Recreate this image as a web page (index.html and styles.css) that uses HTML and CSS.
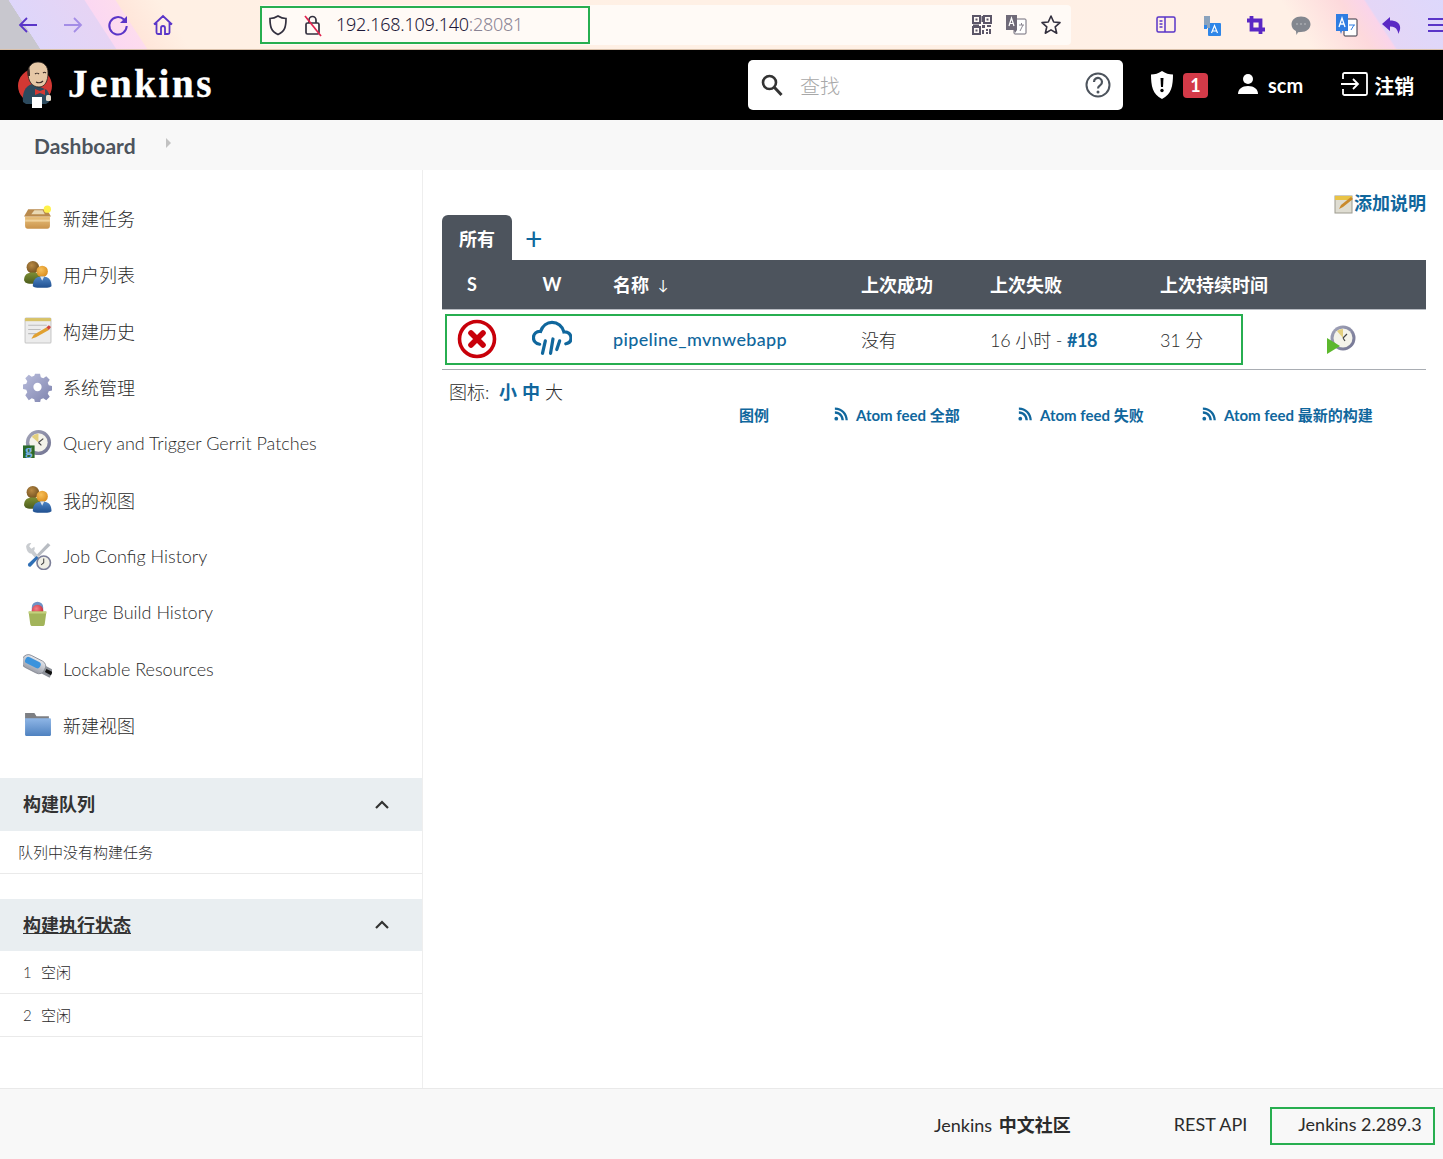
FILE: index.html
```html
<!DOCTYPE html>
<html lang="zh">
<head>
<meta charset="utf-8">
<title>Dashboard [Jenkins]</title>
<link rel="stylesheet" href="styles.css">
</head>
<body>
<svg class="defs" aria-hidden="true">
  <defs>
    <radialGradient id="gBrown" cx=".4" cy=".35" r=".7"><stop offset="0" stop-color="#b98a44"/><stop offset="1" stop-color="#6f4e1e"/></radialGradient>
    <radialGradient id="gOrange" cx=".4" cy=".35" r=".7"><stop offset="0" stop-color="#f8c058"/><stop offset="1" stop-color="#d88a1c"/></radialGradient>
    <linearGradient id="gBlue" x1="0" y1="0" x2="0" y2="1"><stop offset="0" stop-color="#4f86c6"/><stop offset="1" stop-color="#1f4f8f"/></linearGradient>
    <linearGradient id="gGreen" x1="0" y1="0" x2="0" y2="1"><stop offset="0" stop-color="#7d8f35"/><stop offset="1" stop-color="#4c5c1c"/></linearGradient>
    <linearGradient id="gGear" x1="0" y1="0" x2="1" y2="1"><stop offset="0" stop-color="#b9bddc"/><stop offset="1" stop-color="#7d82ad"/></linearGradient>
    <linearGradient id="gBox" x1="0" y1="0" x2="0" y2="1"><stop offset="0" stop-color="#e9c27e"/><stop offset="1" stop-color="#c9924a"/></linearGradient>
    <linearGradient id="gFolder" x1="0" y1="0" x2="0" y2="1"><stop offset="0" stop-color="#8fb6e6"/><stop offset="1" stop-color="#4f82c0"/></linearGradient>
    <linearGradient id="gRing" x1="0" y1="0" x2="1" y2="1"><stop offset="0" stop-color="#a5a7bb"/><stop offset="1" stop-color="#6f7190"/></linearGradient>
    <linearGradient id="gUsb" x1="0" y1="0" x2="0" y2="1"><stop offset="0" stop-color="#e4e6ec"/><stop offset="1" stop-color="#9a9ea8"/></linearGradient>
    <radialGradient id="gBall" cx=".4" cy=".35" r=".7"><stop offset="0" stop-color="#f3808a"/><stop offset="1" stop-color="#c9222f"/></radialGradient>
  </defs>
  <symbol id="people" viewBox="0 0 28 28">
    <circle cx="9.500" cy="7" r="6" fill="url(#gBrown)"/>
    <path d="M1 20c0-6 3-8 8.500-8s8.500 2 8.500 8c0 2-2 3-8 3s-8.500-1-8.500-3z" fill="url(#gGreen)"/>
    <circle cx="18.500" cy="11" r="5.500" fill="url(#gOrange)"/>
    <path d="M9.500 25c0-6 3-9 9-9s9 3 9 9c0 2.500-18 2.500-18 0z" fill="url(#gBlue)"/>
    <path d="M16.500 16h4l-2 4z" fill="#dfe6ee"/>
  </symbol>
  <symbol id="rss" viewBox="0 0 16 16">
    <circle cx="3.500" cy="12.500" r="2" fill="#10679d"/>
    <path d="M2 7.200c4 0 7 3 7 7h2.600c0-5.500-4.200-9.600-9.600-9.600z" fill="#10679d"/>
    <path d="M2 2.800v-2.300c7.800 0 13.800 6 13.800 13.700h-2.400c0-6.500-5-11.400-11.400-11.400z" fill="#10679d"/>
  </symbol>
  <symbol id="chev" viewBox="0 0 16 10">
    <path d="M2 8l6-6 6 6" fill="none" stroke="#333" stroke-width="2.200"/>
  </symbol>
</svg>

<div class="browser">
  <div class="nav-icons">
    <svg class="tool" viewBox="0 0 24 24"><path d="M21 12H4M11 5l-7 7 7 7" fill="none" stroke="#5a35c8" stroke-width="1.800"/></svg>
    <svg class="tool" viewBox="0 0 24 24"><path d="M3 12h17M13 5l7 7-7 7" fill="none" stroke="#a48de6" stroke-width="1.800"/></svg>
    <svg class="tool" viewBox="0 0 24 24"><path d="M18 6.500A8.700 8.700 0 1 0 20.700 13" fill="none" stroke="#5a35c8" stroke-width="2"/><path d="M21 3v7h-7z" fill="#5a35c8"/></svg>
    <svg class="tool" viewBox="0 0 24 24"><path d="M3 11.500L12 3l9 8.500M5.500 10v9.500c0 .8.700 1.500 1.500 1.500h3v-6a2 2 0 0 1 4 0v6h3c.8 0 1.500-.7 1.500-1.500V10" fill="none" stroke="#5a35c8" stroke-width="1.800"/></svg>
  </div>
  <div class="urlbar">
    <svg class="url-ic" viewBox="0 0 20 24"><path d="M10 3c3 2 5 2.500 8 2.500 0 8-1 13-8 16-7-3-8-8-8-16 3 0 5-.5 8-2.500z" fill="none" stroke="#33303f" stroke-width="1.700"/></svg>
    <svg class="url-ic" viewBox="0 0 20 24"><rect x="3" y="10" width="13" height="11" rx="1.500" fill="none" stroke="#33303f" stroke-width="1.700"/><path d="M6 10V7a3.500 3.500 0 0 1 7 0v3" fill="none" stroke="#33303f" stroke-width="1.700"/><path d="M2 3l16 20" stroke="#e0234e" stroke-width="1.700"/></svg>
    <span class="url">192.168.109.140<span class="port">:28081</span></span>
    <div class="url-end">
      <svg class="url-ic2 qr" viewBox="0 0 20 20"><path d="M1 1h7v7H1zM12 1h7v7h-7zM1 12h7v7H1z" fill="none" stroke="#5c5668" stroke-width="2"/><path d="M3.500 3.500h2v2h-2zM14.500 3.500h2v2h-2zM3.500 14.500h2v2h-2zM10 10h3v3h-3zM15 10h4v2h-4zM10 15h2v4h-2zM14 14h2v2h-2zM17 14h2v5h-2zM14 17h2v2h-2zM9.500 1h1.500v6H9.500zM1 9.500h6V11H1z" fill="#5c5668"/></svg>
      <svg class="url-ic2" viewBox="0 0 22 22"><rect x="9" y="5" width="12" height="15" rx="1" fill="#fff" stroke="#6f6a78"/><path d="M1 1h11v15l-2 3-1-3H1z" fill="#6f6a78"/><path d="M4 12l2.500-8 2.500 8M5 9.500h3" fill="none" stroke="#fff" stroke-width="1.200"/><path d="M14 11h5M16.500 9v2M15 17l3-6" stroke="#8b8691" fill="none"/></svg>
      <svg class="url-ic2" viewBox="0 0 22 22"><path d="M11 2l2.700 6 6.300.6-4.800 4.200 1.500 6.400L11 15.900l-5.700 3.300 1.500-6.400L2 8.600 8.300 8z" fill="none" stroke="#33303f" stroke-width="1.600" stroke-linejoin="round"/></svg>
    </div>
  </div>
  <div class="ext-icons">
    <svg class="ext" viewBox="0 0 24 24"><rect x="3" y="4" width="18" height="15" rx="1.500" fill="none" stroke="#5a35c8" stroke-width="1.500"/><path d="M11 4v15" stroke="#5a35c8" stroke-width="1.500"/><path d="M5.500 8h3M5.500 11h3M5.500 14h3" stroke="#5a35c8" stroke-width="1.500"/></svg>
    <svg class="ext" viewBox="0 0 24 24"><rect x="9" y="10" width="13" height="13" rx="1" fill="#2f86e8"/><path d="M12.500 20l3-7.500 3 7.500M13.500 18h4" fill="none" stroke="#fff" stroke-width="1.200"/><path d="M5 3h6v12H8l-1-3H5z" fill="#8ba3bd"/><path d="M5 12h3v4H5z" fill="#2f86e8"/></svg>
    <svg class="ext" viewBox="0 0 24 24"><path d="M7.500 3v13.500H21M3 7.500h13.500V21" fill="none" stroke="#5a28c4" stroke-width="3.800"/></svg>
    <svg class="ext" viewBox="0 0 24 24"><path d="M12 3.500c5.500 0 9.500 3.300 9.500 7.800s-4 7.700-9.500 7.700l-3 .2-1.500 2.800-.6-3.900C4 16.600 2.500 14.200 2.500 11.300 2.500 6.800 6.500 3.500 12 3.500z" fill="#83878f"/><circle cx="8" cy="11" r="1" fill="#a8abb1"/><circle cx="12" cy="11" r="1" fill="#a8abb1"/><circle cx="16" cy="11" r="1" fill="#a8abb1"/></svg>
    <svg class="ext" viewBox="0 0 24 24"><rect x="10" y="6" width="13" height="17" rx="1" fill="#fff" stroke="#33303f"/><path d="M2 1h12v17H8l-1 3-1-3H2z" fill="#2f7de2"/><path d="M5 14l3-9 3 9M6 11h4" fill="none" stroke="#fff" stroke-width="1.300"/><path d="M15 12h6M17 17l3-5" stroke="#2f7de2" fill="none"/></svg>
    <svg class="ext" viewBox="0 0 24 24"><path d="M11 4L3 11l8 7v-4.500c4 0 6 1.500 7 3.500 1.500 2 1 4 1 4 3-4 3-9-.5-11.500-2-1.500-4.500-2-7.500-2z" fill="#5a28c4"/></svg>
    <svg class="ext" viewBox="0 0 24 24"><path d="M4 6h20M4 12h20M4 18h20" stroke="#5a35c8" stroke-width="1.800"/></svg>
  </div>
  <div class="mark mark-url"></div>
</div>

<header class="topbar">
  <a class="brand">
    <svg class="butler" viewBox="0 0 35 48">
      <circle cx="17" cy="25" r="17" fill="#d33833"/>
      <path d="M5 41c-1-9 2-16 9-18l6 2 9 4c3 4 3 8 2 12l-3 2H8z" fill="#2c4a5e"/>
      <path d="M10 12C10 5 14 1 20 1s10 4 10 11c0 8-3 14-9 14-7 0-11-6-11-14z" fill="#e6c8a6" stroke="#2a2320" stroke-width=".8"/>
      <path d="M10 15c-1-3-1-6 1-9 1 3 1 6 1 9z" fill="#3a2c28"/>
      <path d="M17 13c1-1 3-1 4 0M25 12c1-1 2-1 3 0M18 21c2 1 5 1 7-1" fill="none" stroke="#3a2c28" stroke-width="1.100"/>
      <path d="M17 28l5 2 5-2v6l-5-2-5 2z" fill="#d33833"/>
      <path d="M14 36h10v11H14z" fill="#fff"/>
      <rect x="28" y="34" width="5" height="6" rx="1.500" fill="#e6dccd"/>
    </svg>
    <span class="brand-name">Jenkins</span>
  </a>
  <div class="search">
    <svg class="search-ic" viewBox="0 0 24 24"><circle cx="9.500" cy="9.500" r="6.500" fill="none" stroke="#333" stroke-width="2.600"/><path d="M14.500 14.500l7 7.500" stroke="#333" stroke-width="3"/></svg>
    <span class="search-ph">查找</span>
    <svg class="help-ic" viewBox="0 0 26 26"><circle cx="13" cy="13" r="11.500" fill="none" stroke="#4d545d" stroke-width="2"/><path d="M9 10a4 4 0 1 1 6.300 3.200c-1.500 1-2.300 1.800-2.300 3.300" fill="none" stroke="#4d545d" stroke-width="2.200"/><circle cx="13" cy="20" r="1.500" fill="#4d545d"/></svg>
  </div>
  <svg class="shield" viewBox="0 0 24 30"><path d="M12 1c3.500 2.500 7 3.400 11 3.600 0 11-1.500 20-11 24.400C2.500 24.600 1 15.600 1 4.600 5 4.400 8.500 3.500 12 1z" fill="#fff"/><path d="M10.500 8h3l-.5 9h-2z" fill="#000"/><circle cx="12" cy="20.500" r="1.700" fill="#000"/></svg>
  <span class="badge">1</span>
  <svg class="user-ic" viewBox="0 0 22 22"><circle cx="11" cy="6" r="5" fill="#fff"/><path d="M1 21c0-5 4-8 10-8s10 3 10 8z" fill="#fff"/></svg>
  <span class="user-name">scm</span>
  <svg class="logout-ic" viewBox="0 0 28 24"><path d="M3 7V2.500C3 1.700 3.700 1 4.500 1h21c.8 0 1.500.7 1.500 1.500v19c0 .8-.7 1.500-1.500 1.500h-21c-.8 0-1.500-.7-1.500-1.500V17" fill="none" stroke="#fff" stroke-width="1.800"/><path d="M1 12h17M13 7l5 5-5 5" fill="none" stroke="#fff" stroke-width="1.800"/></svg>
  <span class="logout">注销</span>
</header>

<nav class="crumbs">
  <a class="crumb">Dashboard</a>
  <span class="crumb-arrow"></span>
</nav>

<div class="page">
  <aside class="side">
    <ul class="tasks">
      <li class="task">
        <svg class="task-ic" viewBox="0 0 28 28"><path d="M2 12h24v9c0 1.500-1 3-2.500 3h-19C3 24 2 22.500 2 21z" fill="url(#gBox)"/><path d="M1 12l4-7h18l4 7z" fill="#b98a4d"/><path d="M2 15h24v2H2z" fill="#f0d29c"/><path d="M8 10l3-4h8l2 4z" fill="#e9d9b4"/><circle cx="23.500" cy="5" r="3.500" fill="#fff24a"/></svg>
        <span>新建任务</span>
      </li>
      <li class="task"><svg class="task-ic"><use href="#people"/></svg><span>用户列表</span></li>
      <li class="task">
        <svg class="task-ic" viewBox="0 0 28 28"><rect x="2" y="2" width="25" height="24" rx="1" fill="#ececec" stroke="#c6c6c6"/><path d="M2 2h25v3H2z" fill="#d8c266"/><path d="M5 9h18M5 13h12M5 17h8" stroke="#bcbcbc"/><path d="M8 22l2.500-4 12-7 2.500 2.500-12.500 7z" fill="#e0a030"/><path d="M22.500 11l2.500 2.500 2-3-2-1.500z" fill="#d1433b"/></svg>
        <span>构建历史</span>
      </li>
      <li class="task">
        <svg class="task-ic" viewBox="0 0 28 28"><path d="M11.500 1h5l.8 3.500 2.500 1 3-2 3.500 3.500-2 3 1 2.500 3.500.8v4.400l-3.500.8-1 2.500 2 3-3.500 3.500-3-2-2.500 1-.8 3.500h-5l-.8-3.500-2.500-1-3 2L1.700 22.500l2-3-1-2.500-3.500-.8V11.800l3.500-.8 1-2.500-2-3L5.200 2l3 2 2.500-1z" fill="url(#gGear)" transform="scale(.96) translate(.6 -.2)"/><circle cx="14" cy="13.500" r="4" fill="#fff"/></svg>
        <span>系统管理</span>
      </li>
      <li class="task">
        <svg class="task-ic" viewBox="0 0 30 30"><circle cx="16" cy="14" r="13" fill="url(#gRing)"/><circle cx="16" cy="14" r="9.500" fill="#f4f3ea"/><path d="M16 14V5a9 9 0 0 0-7 3z" fill="#e3cf7e"/><path d="M16 14l5-4M16 14l3 3" stroke="#444" stroke-width="1.200"/><rect x="0" y="17" width="12" height="13" fill="#2a6a2a"/><text class="gerrit-g" x="6" y="27" text-anchor="middle">g</text></svg>
        <span>Query and Trigger Gerrit Patches</span>
      </li>
      <li class="task"><svg class="task-ic"><use href="#people"/></svg><span>我的视图</span></li>
      <li class="task">
        <svg class="task-ic" viewBox="0 0 28 28"><path d="M3 5c1-2.500 3-3.500 5-3L6 5l2 2.500 3-2c.5 1.500.5 3-.5 4L23 24l-2.500 2L8 12c-2 .5-4.500-2-5-7z" fill="#c9ccd0"/><path d="M24 2l2.500 2-11 11-2-2z" fill="#b8bcc2"/><path d="M13 14.500l2 2-7.500 8c-1.500 1-3.500-.5-2.500-2.500z" fill="#2f6fb5"/><circle cx="20" cy="21" r="6.500" fill="#f0efe6" stroke="#7c7f99" stroke-width="1.600"/><path d="M20 17v4l-2.500 2" fill="none" stroke="#444"/></svg>
        <span>Job Config History</span>
      </li>
      <li class="task">
        <svg class="task-ic" viewBox="0 0 28 28"><path d="M8.500 9a5.500 5.500 0 0 1 11 0v4h-11z" fill="#6f93c6"/><circle cx="14" cy="12" r="5.500" fill="url(#gBall)"/><path d="M5.500 13h17v1l-1.500 11c0 1-1 2-2 2h-10c-1 0-2-1-2-2L5.500 14z" fill="#a2b45a"/><path d="M5.500 13h17v2h-17z" fill="#c3d27d"/></svg>
        <span>Purge Build History</span>
      </li>
      <li class="task">
        <svg class="task-ic" viewBox="0 0 30 28"><g transform="rotate(27 12 10)"><rect x="-2" y="3" width="26" height="14" rx="6.500" fill="url(#gUsb)" stroke="#7f838d" stroke-width=".8"/><rect x="1" y="5.500" width="17" height="7" rx="3" fill="#3b93dc"/><rect x="23" y="6" width="9" height="9" fill="#8c9098"/><rect x="25" y="8.500" width="7" height="3.500" fill="#111"/></g></svg>
        <span>Lockable Resources</span>
      </li>
      <li class="task">
        <svg class="task-ic" viewBox="0 0 28 28"><path d="M2 3h9l2 3h12v6H2z" fill="#7d7f83"/><path d="M2 8h24c.5 0 1 .5 1 1v15c0 .5-.5 1-1 1H3c-.5 0-1-.5-1-1z" fill="url(#gFolder)"/></svg>
        <span>新建视图</span>
      </li>
    </ul>

    <section class="pane pane-queue">
      <h2 class="pane-head"><span>构建队列</span><svg class="chev"><use href="#chev"/></svg></h2>
      <div class="pane-row pane-note">队列中没有构建任务</div>
    </section>
    <section class="pane pane-exec">
      <h2 class="pane-head"><span class="u">构建执行状态</span><svg class="chev"><use href="#chev"/></svg></h2>
      <div class="pane-row exec"><span class="num">1</span><span>空闲</span></div>
      <div class="pane-row exec"><span class="num">2</span><span>空闲</span></div>
    </section>
  </aside>

  <main class="main">
    <div class="desc">
      <svg class="note-ic" viewBox="0 0 20 20"><rect x="1" y="2" width="17" height="17" fill="#dfddd2" stroke="#9c9a8e"/><path d="M1 2h17v4H1z" fill="#e9c346"/><path d="M5 15l2-4 10-8 2 2-10 8z" fill="#c98a2c"/></svg>
      <a class="link">添加说明</a>
    </div>
    <div class="tabs">
      <a class="tab">所有</a>
      <a class="tab-add">+</a>
    </div>
    <table class="jobs">
      <colgroup><col class="c1"><col class="c2"><col class="c3"><col class="c4"><col class="c5"><col class="c6"><col class="c7"></colgroup>
      <thead>
        <tr>
          <th class="ctr sh">S</th><th class="ctr">W</th><th class="name">名称&nbsp;&nbsp;<span class="arrow">↓</span></th>
          <th>上次成功</th><th>上次失败</th><th>上次持续时间</th><th></th>
        </tr>
      </thead>
      <tbody>
        <tr>
          <td class="ctr">
            <svg class="st" viewBox="0 0 40 40"><circle cx="20" cy="20" r="17.500" fill="#fff" stroke="#c8000a" stroke-width="3.600"/><path d="M14 14l12 12M26 14L14 26" stroke="#c8000a" stroke-width="5.600" stroke-linecap="round"/></svg>
          </td>
          <td class="ctr">
            <svg class="wx" viewBox="0 0 42 38"><path d="M8 24.500C4 24 1.500 21 1.500 17.500 1.500 13.500 5 10.500 9 11c2-6 7-9.500 12-9.500 6 0 11 4 12.500 10 4-.5 7.500 2.500 7.500 6.500 0 3.500-2.500 5.500-5.500 6" fill="none" stroke="#10679d" stroke-width="3.400" stroke-linecap="round"/><path d="M14 21l-3 13M22 19l-2.500 15M29 21l-3 9" fill="none" stroke="#10679d" stroke-width="3.400" stroke-linecap="round"/></svg>
          </td>
          <td class="name"><a class="link job">pipeline_mvnwebapp</a></td>
          <td>没有</td>
          <td>16 小时 - <a class="link bld">#18</a></td>
          <td>31 分</td>
          <td class="ctr">
            <svg class="sched" viewBox="0 0 30 30"><circle cx="17" cy="13" r="12.500" fill="url(#gRing)"/><circle cx="17" cy="13" r="9.500" fill="#f4f3ea"/><path d="M17 13V4a9 9 0 0 0-6 2z" fill="#e3cf7e"/><path d="M17 13l4-4M17 13l2 3" stroke="#444" stroke-width="1.200"/><path d="M1 13l13 8-13 8z" fill="#5cb82d"/></svg>
          </td>
        </tr>
      </tbody>
    </table>
    <div class="sizes">图标:&nbsp;&nbsp;<a class="link strong">小</a> <a class="link strong">中</a> <span>大</span></div>
    <div class="feeds">
      <a class="link legend">图例</a>
      <a class="link feed"><svg class="rss"><use href="#rss"/></svg>Atom feed 全部</a>
      <a class="link feed"><svg class="rss"><use href="#rss"/></svg>Atom feed 失败</a>
      <a class="link feed"><svg class="rss"><use href="#rss"/></svg>Atom feed 最新的构建</a>
    </div>
    <div class="mark mark-row"></div>
  </main>
</div>

<footer class="foot">
  <span class="foot-a">Jenkins <b>中文社区</b></span>
  <span class="foot-b">REST API</span>
  <span class="foot-c">Jenkins 2.289.3</span>
  <div class="mark mark-ver"></div>
</footer>
</body>
</html>
```

FILE: styles.css
```css
* { box-sizing: border-box; }
html, body { margin: 0; padding: 0; }
body {
  width: 1443px;
  height: 1159px;
  overflow: hidden;
  position: relative;
  display: flex;
  flex-direction: column;
  background: #fff;
  color: #2b2b2b;
  font-family: Lato, "Noto Sans CJK SC", sans-serif;
  font-size: 18px;
  font-weight: 300;
}
.defs { position: absolute; width: 0; height: 0; }
a { color: inherit; text-decoration: none; }

/* browser chrome */
.browser {
  height: 50px;
  flex: none;
  display: flex;
  align-items: center;
  position: relative;
  border-bottom: 1px solid #d8bfa8;
  background: linear-gradient(57deg, #c8c7ce 0, #c8c7ce 33.5px, #ded6fa 34px, #e6d4f4 97px, #fbd8f2 98px, #fddcee 123px, #ffe6da 124px, #fff0e4 160px, #fff0e6 1100px, #fdd9dc 1150px, #fad4ea 1170px, #e4d6f6 1172px, #ddd8fc 100%);
}
.nav-icons { display: flex; gap: 21px; padding-left: 16px; width: 260px; flex: none; }
.tool { width: 24px; height: 24px; }
.urlbar {
  width: 811px;
  height: 40px;
  flex: none;
  display: flex;
  align-items: center;
  padding-left: 8px;
  background: #fffaf6;
  border-radius: 4px;
}
.url-ic { width: 20px; height: 24px; margin-right: 15px; }
.url { font-size: 18px; font-family: "Noto Sans", sans-serif; color: #1d1838; letter-spacing: -.25px; margin-left: -2px; margin-top: -2px; }
.port { color: #8a8494; }
.url-end { margin-left: auto; display: flex; gap: 13px; padding-right: 9px; align-items: center; }
.url-ic2 { width: 22px; height: 22px; }
.qr { width: 20px; height: 20px; }
.ext-icons { display: flex; gap: 21px; margin-left: 83px; }
.ext { width: 24px; height: 24px; flex: none; }
.mark { position: absolute; border: 2px solid #27ae50; pointer-events: none; }
.mark-url { left: 260px; top: 6px; width: 330px; height: 38px; }

/* header */
.topbar {
  height: 70px;
  flex: none;
  background: #000;
  display: flex;
  align-items: center;
  color: #fff;
}
.brand { display: flex; align-items: center; padding-left: 18px; width: 748px; flex: none; }
.butler { width: 35px; height: 48px; flex: none; }
.brand-name {
  margin-left: 15px;
  margin-top: -4px;
  font-family: "Liberation Serif", serif;
  font-weight: 700;
  font-size: 39px;
  letter-spacing: 2.6px;
  -webkit-text-stroke: .4px #fff;
}
.search {
  width: 375px;
  height: 50px;
  flex: none;
  background: #fff;
  border-radius: 5px;
  display: flex;
  align-items: center;
  padding: 0 12px;
}
.search-ic { width: 24px; height: 24px; }
.search-ph { margin-left: 16px; font-size: 20px; color: #a8a8a8; }
.help-ic { width: 26px; height: 26px; margin-left: auto; }
.shield { width: 24px; height: 30px; margin-left: 27px; flex: none; }
.badge {
  width: 25px;
  height: 25px;
  margin-left: 9px;
  flex: none;
  border-radius: 4px;
  background: #d33a48;
  font-size: 18px;
  font-weight: 700;
  line-height: 25px;
  text-align: center;
}
.user-ic { width: 22px; height: 22px; margin-left: 29px; margin-top: -3px; flex: none; }
.user-name { margin-left: 9px; font-size: 20px; font-weight: 700; }
.logout-ic { width: 28px; height: 24px; margin-left: 37px; flex: none; margin-top: -2px; }
.logout { margin-left: 6px; font-size: 20px; font-weight: 700; }

/* breadcrumb */
.crumbs {
  height: 50px;
  flex: none;
  background: #f8f8f8;
  display: flex;
  align-items: center;
  padding-left: 34px;
  color: #4d545d;
}
.crumb { font-size: 21px; font-weight: 700; }
.crumb-arrow {
  margin-left: 30px;
  margin-top: -4px;
  border-left: 5px solid #c2c2c2;
  border-top: 5px solid transparent;
  border-bottom: 5px solid transparent;
}

/* layout */
.page { flex: 1; display: flex; min-height: 0; }
.side { width: 423px; flex: none; border-right: 1px solid #eee; }
.main { flex: 1; position: relative; padding: 0 17px 0 19px; }

.tasks { list-style: none; margin: 0; padding: 20px 0 25px 0; }
.task {
  height: 56.300px;
  display: flex;
  align-items: center;
  padding-left: 23px;
  gap: 11px;
  font-size: 18px;
}
.task-ic { width: 29px; height: 29px; flex: none; }
.gerrit-g { font-family: "Liberation Serif", serif; font-size: 15px; font-weight: 700; fill: #7fb2e6; }

.pane-head {
  margin: 0;
  height: 53px;
  background: #e9eef1;
  display: flex;
  align-items: center;
  justify-content: space-between;
  padding: 0 32px 2px 23px;
  font-size: 18px;
  font-weight: 700;
  color: #333;
}
.pane-exec { margin-top: 25px; }
.pane-exec .pane-head { height: 52px; }
.u { text-decoration: underline; }
.chev { width: 16px; height: 10px; margin-top: 3px; }
.pane-row {
  height: 43px;
  display: flex;
  align-items: center;
  font-size: 15px;
  border-bottom: 1px solid #eaeaea;
}
.pane-note { padding-left: 18px; }
.exec { padding-left: 23px; gap: 10px; }
.num { width: 8px; }

/* main */
.link { color: #10679d; }
.desc {
  display: flex;
  justify-content: flex-end;
  align-items: center;
  height: 45px;
  font-weight: 700;
  font-size: 18px;
  padding-top: 19px;
}
.note-ic { width: 20px; height: 20px; margin-top: 4px; }
.tabs { display: flex; align-items: center; height: 45px; }
.tab {
  width: 70px;
  height: 45px;
  background: #4d545d;
  border-radius: 6px 6px 0 0;
  color: #fff;
  font-weight: 700;
  text-align: center;
  line-height: 49px;
}
.tab-add { margin-left: 13px; color: #10679d; font-size: 30px; font-weight: 400; line-height: 45px; margin-top: 2px; }
.jobs { width: 984px; border-collapse: collapse; table-layout: fixed; }
.c1 { width: 70px; } .c2 { width: 80px; } .c3 { width: 269px; } .c4 { width: 129px; }
.c5 { width: 170px; } .c6 { width: 96px; } .c7 { width: 170px; }
.jobs th {
  height: 49px;
  padding: 0;
  background: #4d545d;
  color: #fff;
  text-align: left;
  font-size: 18px;
  font-weight: 700;
  border-bottom: 1px solid #b8bcc2;
  white-space: nowrap;
}
.jobs th.ctr, .jobs td.ctr { text-align: center; }
.jobs th.sh { padding-right: 10px; }
.jobs .name { padding-left: 21px; }
.arrow { font-weight: 400; font-size: 14px; position: relative; top: -2px; }
.jobs td {
  height: 60px;
  padding: 0;
  font-size: 18px;
  border-bottom: 1px solid #a9adb3;
  white-space: nowrap;
  letter-spacing: -.15px;
}
.st { width: 40px; height: 40px; display: block; margin: 0 auto; }
.wx { width: 40px; height: 38px; display: block; margin: 0 auto; }
.sched { width: 30px; height: 30px; display: block; margin: 1px auto 0; }
.job { font-weight: 500; letter-spacing: .35px; }
.bld { font-weight: 700; letter-spacing: -.4px; }
.sizes { padding: 10px 0 0 7px; height: 33px; line-height: 24px; }
.strong { font-weight: 700; }
.feeds { position: relative; height: 24px; display: flex; padding-left: 297px; font-size: 15px; font-weight: 700; line-height: 24px; }
.legend { width: 94px; font-weight: 700; }
.feed { display: inline-flex; align-items: center; gap: 8px; width: 184px; }
.rss { width: 15px; height: 15px; flex: none; }
.mark-row { left: 22px; top: 144px; width: 798px; height: 51px; }

/* footer */
.foot {
  height: 71px;
  flex: none;
  background: #f8f8f8;
  border-top: 1px solid #e9e9e9;
  display: flex;
  align-items: center;
  padding-left: 934px;
  position: relative;
  font-weight: 400;
}
.foot-a { word-spacing: 2px; }
.foot-a b { font-weight: 700; }
.foot-b { margin-left: 103px; }
.foot-c { margin-left: 51px; }
.mark-ver { left: 1270px; top: 18px; width: 165px; height: 38px; }
```
